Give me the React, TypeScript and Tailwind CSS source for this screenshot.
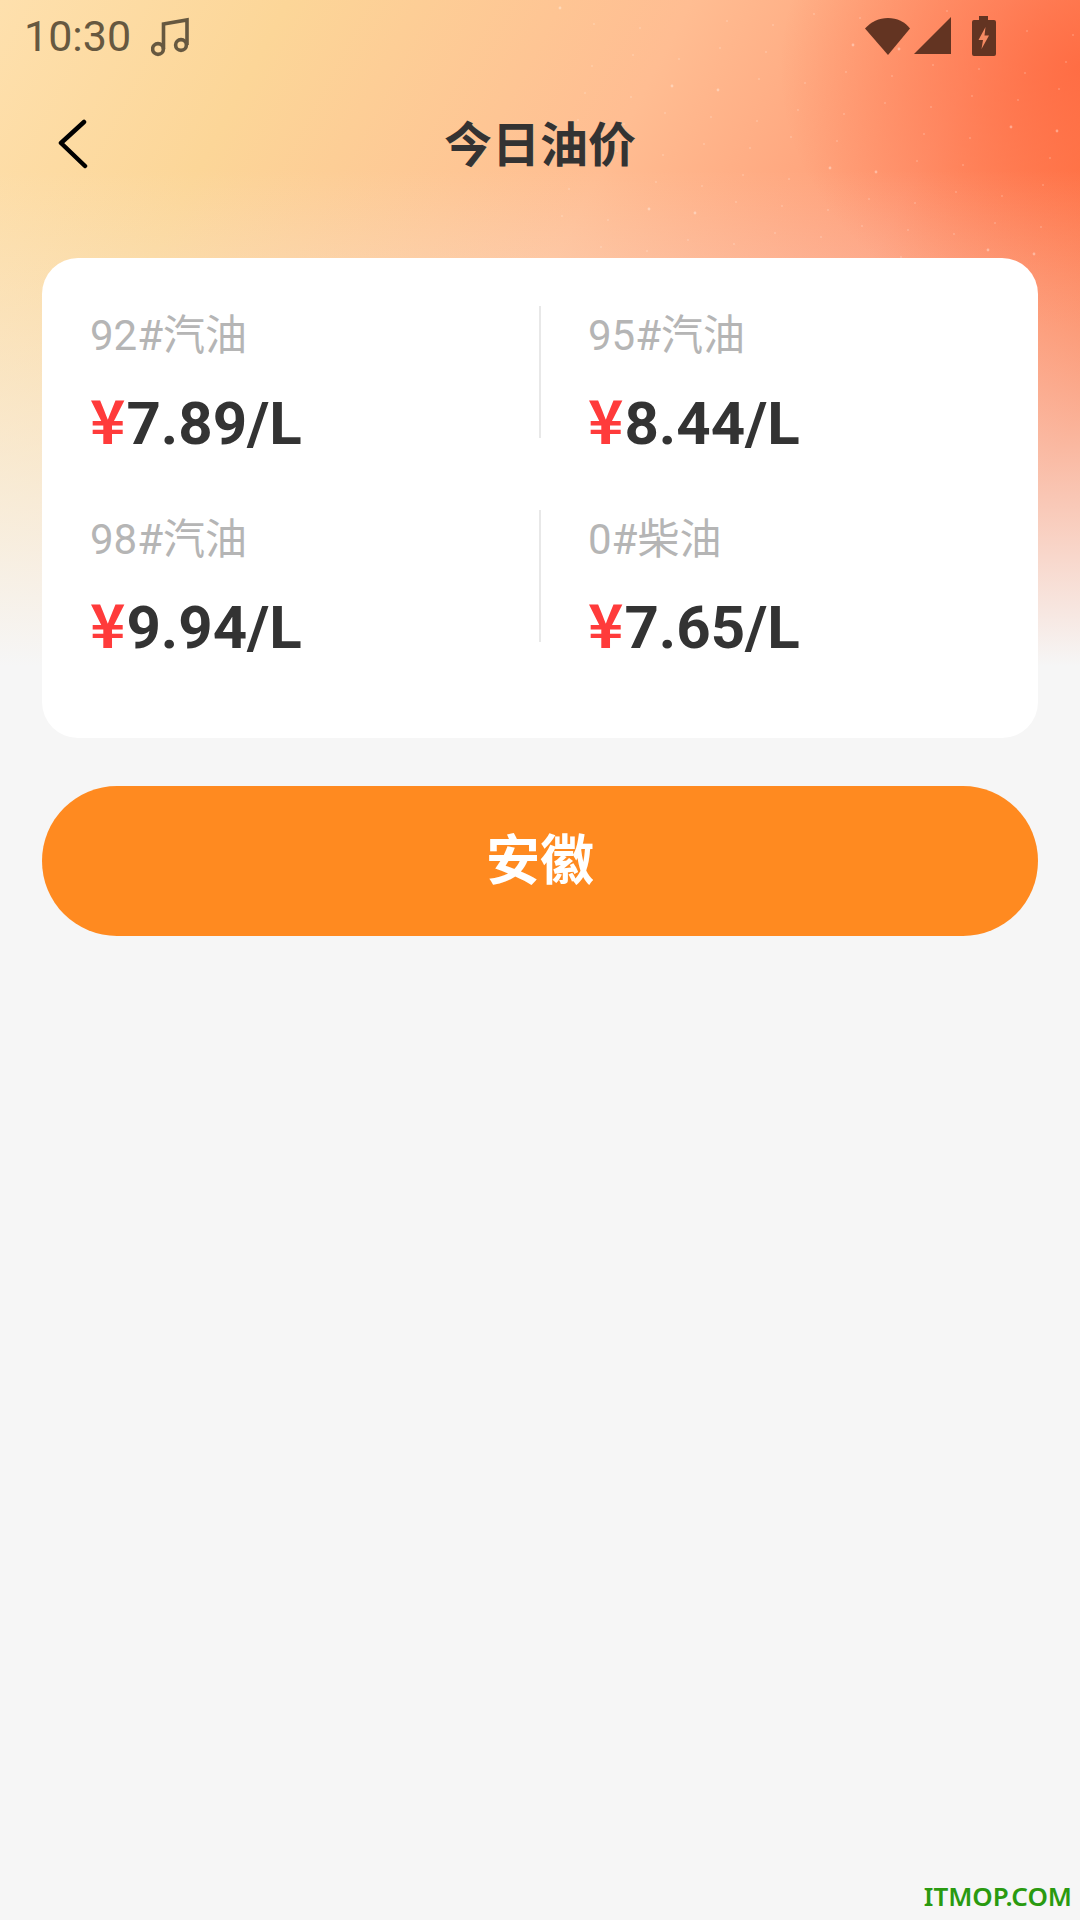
const prices = [
  [
    { name: "92#汽油", value: "7.89" },
    { name: "95#汽油", value: "8.44" },
  ],
  [
    { name: "98#汽油", value: "9.94" },
    { name: "0#柴油", value: "7.65" },
  ],
];

// Fine light grain scattered over the warm part of the banner.
const grain = Array.from({ length: 90 }, (_, i) => ({
  x: 560 + ((i * 197) % 520),
  y: 8 + ((i * 113) % 250),
  r: i % 7 === 0 ? 1.4 : 0.8,
}));

function StatusBar() {
  return (
    <div className="flex h-[72px] items-center pl-[24px] pr-[84px]">
      <span className="text-[43px] leading-none text-[#665840]">10:30</span>
      <svg className="ml-[20px]" width="40" height="42" viewBox="0 0 40 42" fill="none" stroke="#665840" strokeWidth="3.6">
        <circle cx="7" cy="34" r="5.4" />
        <circle cx="30" cy="30" r="5.4" />
        <path d="M12.500 34V9L36 5V30" />
      </svg>
      <div className="ml-auto flex items-center">
        <svg width="46" height="38" viewBox="0 0 46 38" fill="#633422">
          <path d="M0 11.500C6 5 14 1 23 1S40 5 45 11.500L23 38Z" />
        </svg>
        <svg className="ml-[3px]" width="38" height="38" viewBox="0 0 38 38" fill="#633422">
          <path d="M37 0V37H0Z" />
        </svg>
        <svg className="ml-[20px]" width="24" height="40" viewBox="0 0 24 40" fill="#633422">
          <path d="M7 0H16V4H22A2 2 0 0 1 24 6V38A2 2 0 0 1 22 40H2A2 2 0 0 1 0 38V6A2 2 0 0 1 2 4H7Z" />
          <path d="M13.500 11L6.500 24H11L9.500 33L17 19.500H12.500Z" fill="#f58a62" />
        </svg>
      </div>
    </div>
  );
}

function Header() {
  return (
    <div className="relative flex h-[144px] items-center justify-center">
      <svg className="absolute left-[58px] top-[47px]" width="34" height="52" viewBox="0 0 34 52" fill="none" stroke="#000" strokeWidth="4.5" strokeLinecap="round" strokeLinejoin="round">
        <path d="M26 3L3 24L27 47" />
      </svg>
      <h1 className="mt-[3px] text-[48px] font-bold leading-none text-[#333333]">今日油价</h1>
    </div>
  );
}

function PriceCell({ name, value, divided }: { name: string; value: string; divided?: boolean }) {
  return (
    <div className={divided ? "-ml-[1px] h-[132px] border-l-2 border-[#e8e8e8] pl-[47px]" : "h-[132px] pl-[48px]"}>
      <div className="pt-[2px] text-[42px] leading-[56px] text-[#b5b5b5]">{name}</div>
      <div className="mt-[22px] text-[60px] font-bold leading-[64px] text-[#333333]">
        <span className="mr-[1px] text-[#ff3b3b]" style={{ fontFamily: '"Noto Sans CJK SC", sans-serif' }}>¥</span>
        {value}/L
      </div>
    </div>
  );
}

export default function App() {
  return (
    <div
      className="relative flex h-[1920px] w-[1080px] flex-col bg-[#f6f6f6] bg-no-repeat bg-[size:100%_680px] bg-[image:linear-gradient(180deg,rgba(246,246,246,0)_0%,rgba(246,246,246,0)_25%,rgba(246,246,246,1)_98%),radial-gradient(300px_260px_at_100%_10%,rgba(255,100,60,0.75)_0%,rgba(255,100,60,0)_100%),linear-gradient(118deg,#fee0ad_0%,#fcd698_20%,#ffbd92_48%,#ff9a74_70%,#ff6a35_90%)]"
      style={{ fontFamily: 'Roboto, "Noto Sans CJK SC", sans-serif' }}
    >
      <svg className="absolute left-0 top-0" width="1080" height="258" fill="#ffffff" fillOpacity="0.35">
        {grain.map((g, i) => (
          <circle key={i} cx={g.x} cy={g.y} r={g.r} />
        ))}
      </svg>
      <div className="relative">
        <StatusBar />
        <Header />
      </div>
      <main className="relative mx-[42px] mt-[42px] flex flex-col gap-[48px]">
        <section className="h-[480px] rounded-[36px] bg-white pt-[48px]">
          {prices.map((row, i) => (
            <div key={i} className={i > 0 ? "mt-[72px] grid grid-cols-2" : "grid grid-cols-2"}>
              <PriceCell {...row[0]} />
              <PriceCell {...row[1]} divided />
            </div>
          ))}
        </section>
        <button className="flex h-[150px] items-center justify-center rounded-full bg-[#ff8a20] text-[54px] font-bold text-white">
          安徽
        </button>
      </main>
      <span className="absolute bottom-[11px] right-[8px] text-[26px] font-semibold leading-none text-[#2a9a10]" style={{ fontFamily: '"Noto Sans", sans-serif' }}>
        ITMOP.COM
      </span>
    </div>
  );
}
